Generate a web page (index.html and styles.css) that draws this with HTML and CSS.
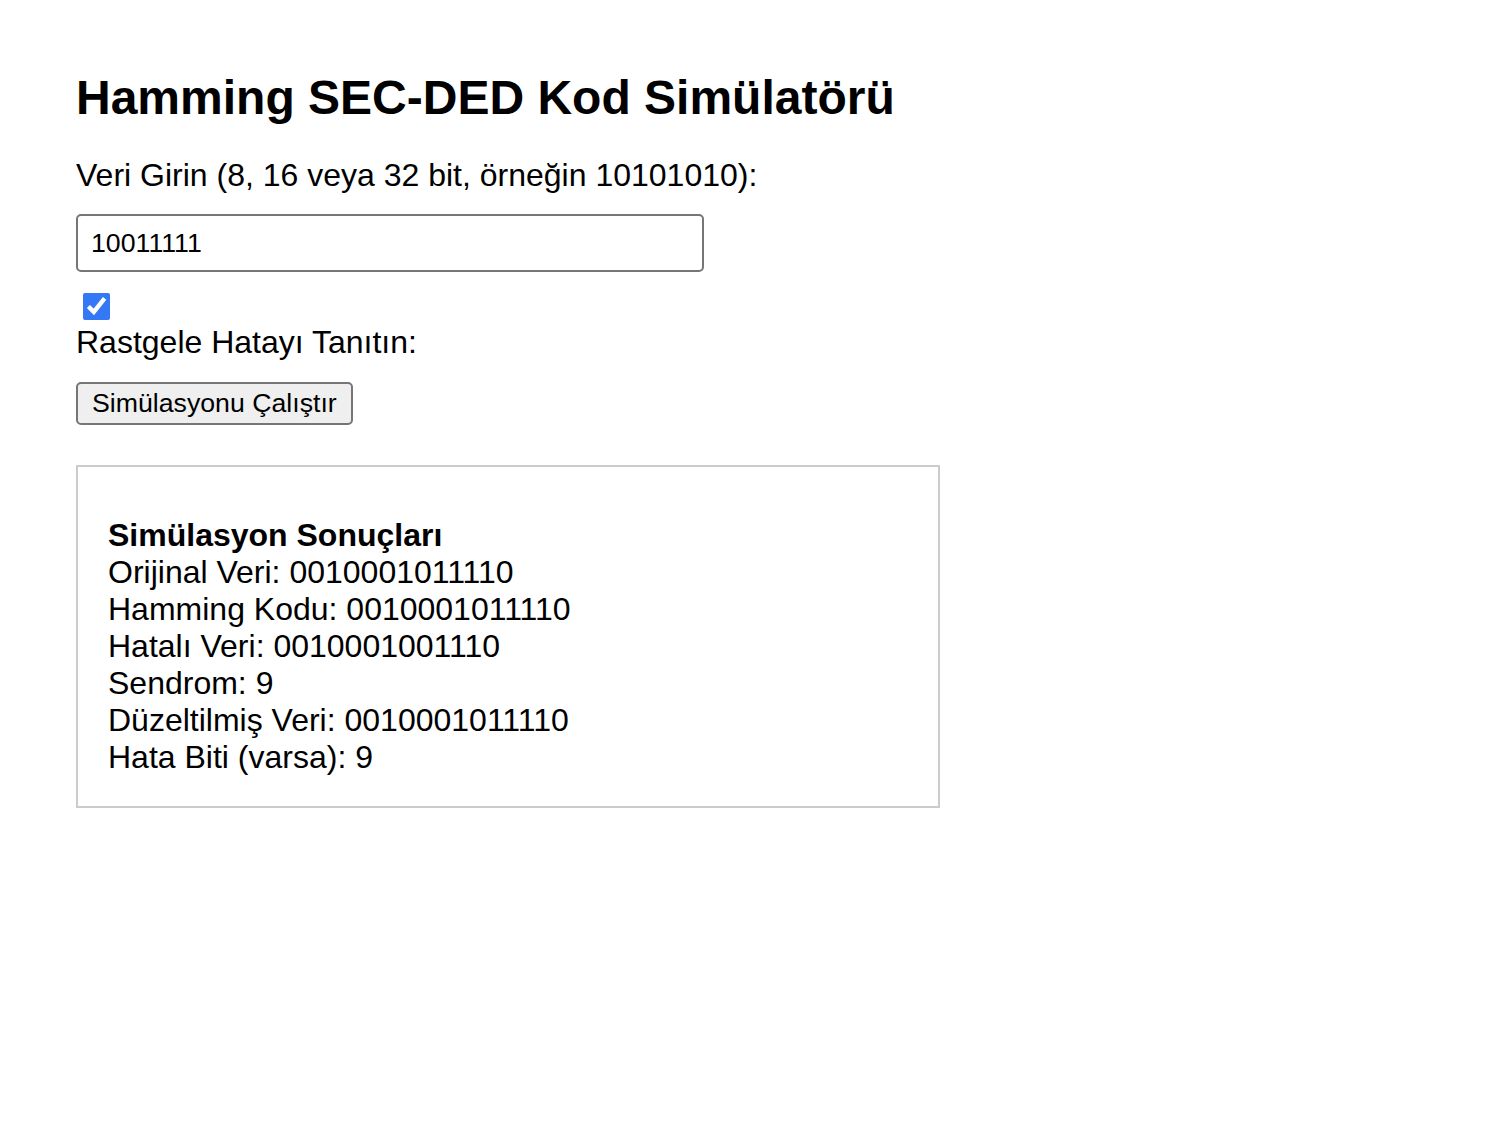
FILE: index.html
```html
<!DOCTYPE html>
<html lang="tr">
<head>
<meta charset="utf-8">
<title>Hamming SEC-DED Kod Simülatörü</title>
<link rel="stylesheet" href="styles.css">
</head>
<body>
<main class="page">
  <h1 class="title">Hamming SEC-DED Kod Simülatörü</h1>
  <label class="field-label" for="data">Veri Girin (8, 16 veya 32 bit, örneğin 10101010):</label>
  <input class="data-input" id="data" type="text" value="10011111">
  <div class="check-row"><input class="check" id="err" type="checkbox" checked></div>
  <label class="field-label check-label" for="err">Rastgele Hatayı Tanıtın:</label>
  <button class="run-btn" type="button">Simülasyonu Çalıştır</button>
  <section class="results">
    <strong class="results-title">Simülasyon Sonuçları</strong>
    <div class="line">Orijinal Veri: 0010001011110</div>
    <div class="line">Hamming Kodu: 0010001011110</div>
    <div class="line">Hatalı Veri: 0010001001110</div>
    <div class="line">Sendrom: 9</div>
    <div class="line">Düzeltilmiş Veri: 0010001011110</div>
    <div class="line">Hata Biti (varsa): 9</div>
  </section>
</main>
</body>
</html>
```

FILE: styles.css
```css
html, body {
  margin: 0;
  padding: 0;
  background: #ffffff;
}

body {
  font-family: "Liberation Sans", Arial, Helvetica, sans-serif;
  color: #000000;
}

.page {
  padding: 70px 0 0 76px;
  display: flex;
  flex-direction: column;
  align-items: flex-start;
}

.title {
  margin: 0;
  font-size: 48px;
  line-height: 55px;
  font-weight: bold;
}

.field-label {
  display: block;
  font-size: 32px;
  line-height: 37px;
  margin-top: 32px;
}

.data-input {
  box-sizing: border-box;
  margin-top: 20px;
  width: 628px;
  height: 58px;
  padding: 0 13px;
  border: 2px solid #767676;
  border-radius: 5px;
  font-family: "Liberation Sans", Arial, sans-serif;
  font-size: 26.7px;
  color: #000000;
  background: #ffffff;
  outline: none;
}

.check-row {
  margin-top: 21px;
  height: 26px;
  display: flex;
}

.check {
  margin: 0 0 0 7px;
  width: 27px;
  height: 27px;
  accent-color: #3478f6;
}

.check-label {
  margin-top: 5px;
}

.run-btn {
  box-sizing: border-box;
  margin-top: 21px;
  height: 43px;
  padding: 0 14px;
  border: 2px solid #767676;
  border-radius: 5px;
  background: #efefef;
  font-family: "Liberation Sans", Arial, sans-serif;
  font-size: 26.7px;
  color: #000000;
  white-space: nowrap;
}

.results {
  box-sizing: border-box;
  margin-top: 40px;
  width: 864px;
  padding: 50px 30px 30px;
  border: 2px solid #cccccc;
  font-size: 32px;
  line-height: 37px;
}

.results-title {
  display: block;
  font-weight: bold;
}

.line {
  display: block;
}
```
